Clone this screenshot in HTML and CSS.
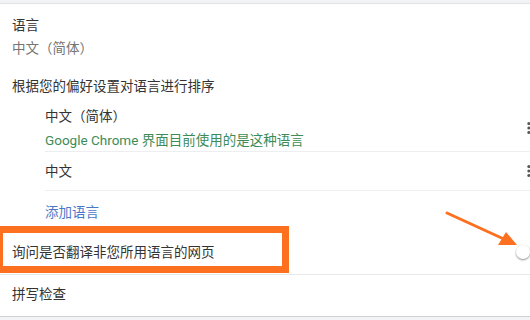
FILE: index.html
```html
<!DOCTYPE html>
<html lang="zh-CN">
<head>
    <meta charset="UTF-8">
    <title>语言设置</title>
    <link rel="stylesheet" href="styles.css">
</head>
<body>
    <div class="page">
        <div class="lang-head">
            <div class="label">语言</div>
            <div class="sub">中文（简体）</div>
        </div>

        <div class="order-title">根据您的偏好设置对语言进行排序</div>

        <div class="lang-list">
            <div class="lang-item first">
                <div>
                    <div class="label">中文（简体）</div>
                    <div class="note">Google Chrome 界面目前使用的是这种语言</div>
                </div>
                <svg class="more" width="3" height="12" viewBox="0 0 3 12">
                    <circle cx="1.8" cy="1.6" r="1.5" fill="#555"/>
                    <circle cx="1.8" cy="6" r="1.5" fill="#555"/>
                    <circle cx="1.8" cy="10.4" r="1.5" fill="#555"/>
                </svg>
            </div>
            <div class="lang-item">
                <div class="label">中文</div>
                <svg class="more" width="3" height="12" viewBox="0 0 3 12">
                    <circle cx="1.8" cy="1.6" r="1.5" fill="#555"/>
                    <circle cx="1.8" cy="6" r="1.5" fill="#555"/>
                    <circle cx="1.8" cy="10.4" r="1.5" fill="#555"/>
                </svg>
            </div>
            <div class="add-lang">添加语言</div>
        </div>

        <div class="row translate-row">
            <span class="label">询问是否翻译非您所用语言的网页</span>
            <span class="knob"></span>
        </div>

        <div class="row spell-row">
            <span class="label">拼写检查</span>
        </div>
    </div>

    <!-- annotation -->
    <div class="mark-box"></div>
    <svg class="mark-arrow" width="80" height="40" viewBox="0 0 80 40">
        <line x1="7" y1="3" x2="66" y2="30" stroke="#fd7020" stroke-width="3" stroke-linecap="round"/>
        <polygon points="77,35 58,35 66,22" fill="#fd7020"/>
    </svg>
</body>
</html>
```

FILE: styles.css
```css
body {
    margin: 0;
    padding: 0;
    background-color: #f1f3f4;
    font-family: Roboto, "Noto Sans CJK SC", sans-serif;
    font-size: 13.5px;
    color: #333;
    overflow: hidden;
    height: 320px;
    position: relative;
}

.page {
    margin-top: 3px;
    background-color: #fff;
    border-top: 1px solid #e0e2e4;
    border-bottom: 1px solid #cfd2d5;
}

.label, .sub, .note, .order-title, .add-lang {
    line-height: 22px;
}

.lang-head {
    padding: 10px 12px 0;
}

.sub {
    margin-top: 1px;
    color: #757575;
}

.order-title {
    padding: 16px 12px 0;
}

.lang-list {
    padding-left: 45px;
}

.lang-item {
    display: flex;
    justify-content: space-between;
    align-items: center;
    border-bottom: 1px solid #eceeef;
}

.lang-item.first {
    padding-top: 8px;
    padding-bottom: 0;
}

.lang-item.first .note {
    margin-top: 2px;
}

.lang-item + .lang-item {
    padding-top: 8px;
    padding-bottom: 8px;
}

.note {
    color: #3d8c58;
}

.add-lang {
    padding-top: 10px;
    color: #4a78c8;
}

.row {
    display: flex;
    justify-content: space-between;
    align-items: center;
    padding: 0 12px;
}

.translate-row {
    padding-top: 18px;
    padding-bottom: 11px;
    border-bottom: 1px solid #e6e8ea;
}

.spell-row {
    padding-top: 8px;
    padding-bottom: 11px;
}

.knob {
    width: 14px;
    height: 14px;
    margin-right: -12px;
    border-radius: 50%;
    background-color: #fff;
    box-shadow: 0 1px 2px rgba(0, 0, 0, 0.45);
}

.mark-box {
    position: absolute;
    left: -4px;
    top: 226px;
    width: 279px;
    height: 33px;
    border: 7px solid #fd7020;
}

.mark-arrow {
    position: absolute;
    left: 440px;
    top: 210px;
}
```
